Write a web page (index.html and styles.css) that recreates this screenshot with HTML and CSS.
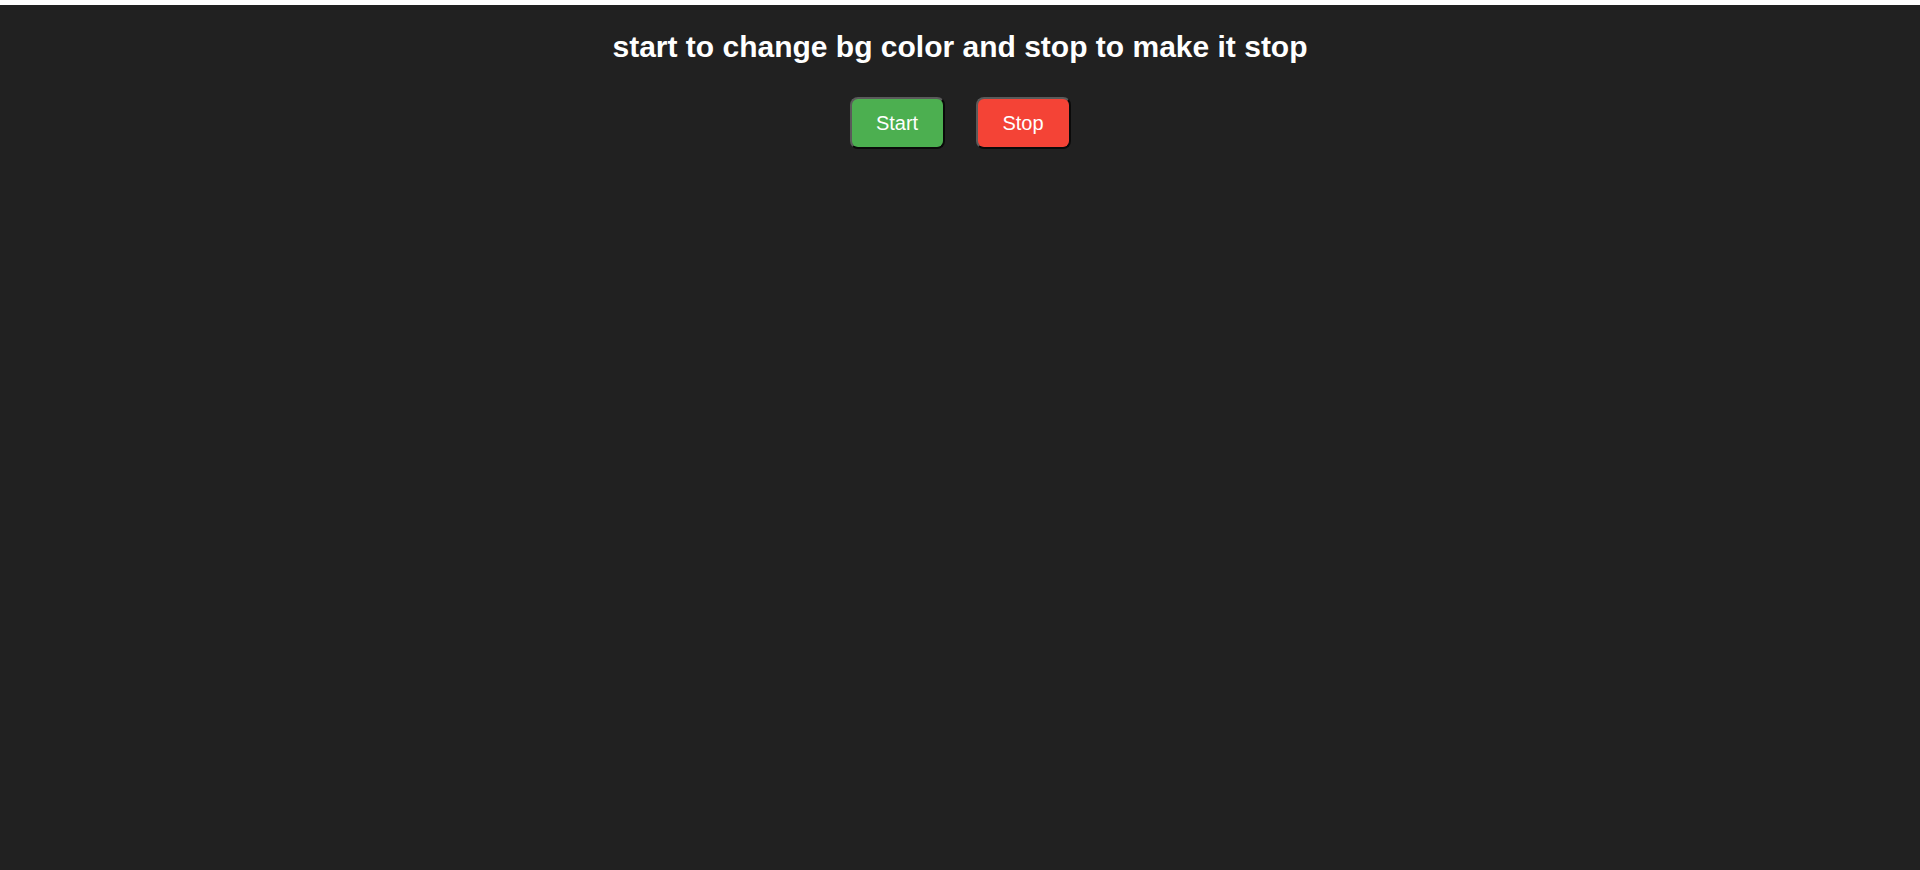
FILE: index.html
```html
<!DOCTYPE html>
<html lang="en">
<head>
<meta charset="utf-8">
<title>Background color changer</title>
<link rel="stylesheet" href="styles.css">
</head>
<body>
<div class="app">
  <h1 class="title">start to change bg color and stop to make it stop</h1>
  <div class="controls">
    <button class="btn btn-start" type="button">Start</button>
    <button class="btn btn-stop" type="button">Stop</button>
  </div>
</div>
</body>
</html>
```

FILE: styles.css
```css
html, body {
  margin: 0;
  padding: 0;
  background: #ffffff;
}

.app {
  margin-top: 5px;
  min-height: 865px;
  background: #212121;
  font-family: "Liberation Sans", Arial, sans-serif;
  color: #ffffff;
  display: flex;
  flex-direction: column;
  align-items: center;
  padding-top: 24px;
  box-sizing: border-box;
}

.title {
  margin: 0;
  font-size: 30px;
  font-weight: bold;
  line-height: 36px;
}

.controls {
  display: flex;
  gap: 31px;
  margin-top: 32px;
}

.btn {
  width: 95px;
  height: 52px;
  font-family: "Liberation Sans", Arial, sans-serif;
  font-size: 20px;
  color: #ffffff;
  border: 2px solid;
  border-color: #5a5a5a #0a0a0a #0a0a0a #5a5a5a;
  border-radius: 8px;
  padding: 0;
  cursor: pointer;
}

.btn-start {
  background: #4caf50;
}

.btn-stop {
  background: #f44336;
}
```
